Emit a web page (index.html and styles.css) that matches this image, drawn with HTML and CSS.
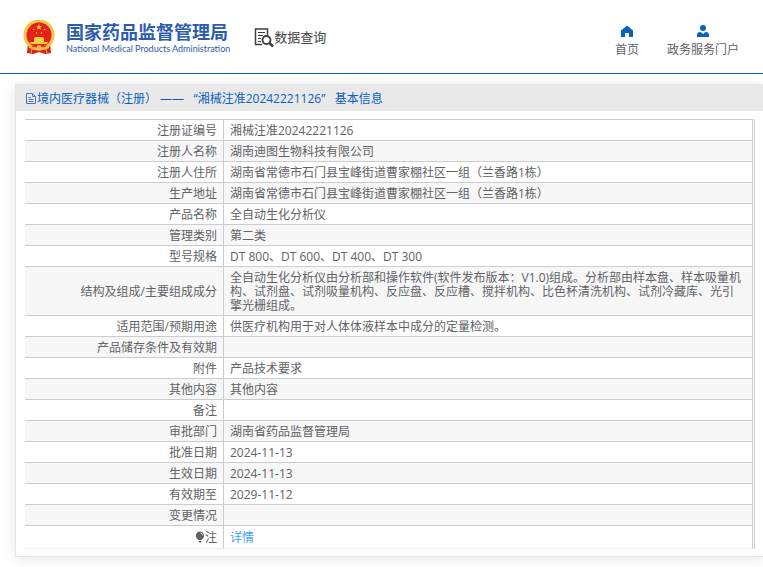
FILE: index.html
```html
<!DOCTYPE html>
<html lang="zh-CN">
<head>
    <meta charset="UTF-8">
    <meta name="viewport" content="width=device-width, initial-scale=1.0">
    <title>国家药品监督管理局 数据查询</title>
    <link rel="stylesheet" href="styles.css">
</head>
<body>
    <header class="header">
        <svg class="emblem" viewBox="0 0 32 34">
            <path d="M5 23 L4 33 L10 34 L16 32 L22 34 L28 33 L27 23 Z" fill="#d9201a"/>
            <circle cx="16" cy="15" r="15.500" fill="#f3bc3c"/>
            <circle cx="16" cy="15" r="14" fill="none" stroke="#f9d45c" stroke-width="1"/>
            <circle cx="16" cy="15" r="12.500" fill="#e3231b"/>
            <path d="M16 4 L16.8 6.1 L19 6.2 L17.3 7.6 L17.9 9.8 L16 8.5 L14.1 9.8 L14.7 7.6 L13 6.2 L15.2 6.1 Z" fill="#f9cf3f"/>
            <circle cx="10.500" cy="9.500" r="0.800" fill="#f9cf3f"/>
            <circle cx="21.500" cy="9.500" r="0.800" fill="#f9cf3f"/>
            <circle cx="13.500" cy="13" r="0.800" fill="#f9cf3f"/>
            <circle cx="18.500" cy="13" r="0.800" fill="#f9cf3f"/>
            <path d="M12 17 H20 L21 19 H11 Z M11 19 H21 V22 H11 Z M7 22 H25 L24 24 H8 Z" fill="#f9cf3f"/>
            <path d="M5 23 Q11 28 16 25 Q21 28 27 23 L26 28 Q21 31 16 29 Q11 31 6 28 Z" fill="#f3bc3c"/>
            <path d="M9 26 Q12 27.500 14 26.500 M18 26.500 Q20 27.500 23 26" fill="none" stroke="#d9201a" stroke-width="1"/>
            <circle cx="16" cy="28" r="2.500" fill="#f3bc3c"/>
            <path d="M9 29 L8 33 M23 29 L24 33" stroke="#f3bc3c" stroke-width="1"/>
        </svg>
        <div class="brand">
            <h1>国家药品监督管理局</h1>
            <p>National Medical Products Administration</p>
        </div>
        <div class="section-name">
            <svg width="20" height="20" viewBox="0 0 20 20" fill="none" stroke="#3d3d4a">
                <path d="M8 16.500 H1.500 V1 H13.500 V7" stroke-width="1.500"/>
                <path d="M4 4.500 H11 M4 7.500 H9 M4 10.500 H7 M4 13.500 H7" stroke-width="1"/>
                <circle cx="12.500" cy="12" r="4" stroke-width="1.800"/>
                <path d="M15.500 15 L19 18.500" stroke-width="2.500"/>
            </svg>
            <span>数据查询</span>
        </div>
        <nav class="nav">
            <a href="#">
                <svg width="12" height="12" viewBox="0 0 12 12" fill="#0860c0">
                    <path d="M6 0.500 L0 5.500 V12 H4 V8 H8 V12 H12 V5.500 Z"/>
                </svg>
                首页
            </a>
            <a href="#">
                <svg width="12" height="12" viewBox="0 0 12 12" fill="#0860c0">
                    <circle cx="6" cy="3" r="3"/>
                    <path d="M0 12 V10 Q0 7.200 3.500 7 L6 9 L8.500 7 Q12 7.200 12 10 V12 Z"/>
                </svg>
                政务服务门户
            </a>
        </nav>
    </header>

    <main class="card">
        <h2 class="card-title">
            <svg width="10" height="12" viewBox="0 0 10 12" fill="none" stroke="#4a78c0">
                <path d="M0.500 0.500 H6.500 L9.500 3.500 V10.500 H0.500 Z M6.500 0.500 V3.500 H9.500 M2.500 4.500 H5 M2.500 6.500 H7.500 M2.500 8.500 H7.500"/>
            </svg>
            <span>境内医疗器械（注册） ——&nbsp;&nbsp; “湘械注准20242221126”&nbsp;&nbsp; 基本信息</span>
        </h2>
        <div class="table-wrap">
            <table>
                <tbody>
                    <tr><th scope="row">注册证编号</th><td>湘械注准20242221126</td></tr>
                    <tr><th scope="row">注册人名称</th><td>湖南迪图生物科技有限公司</td></tr>
                    <tr><th scope="row">注册人住所</th><td>湖南省常德市石门县宝峰街道曹家棚社区一组（兰香路1栋）</td></tr>
                    <tr><th scope="row">生产地址</th><td>湖南省常德市石门县宝峰街道曹家棚社区一组（兰香路1栋）</td></tr>
                    <tr><th scope="row">产品名称</th><td>全自动生化分析仪</td></tr>
                    <tr><th scope="row">管理类别</th><td>第二类</td></tr>
                    <tr><th scope="row">型号规格</th><td>DT 800、DT 600、DT 400、DT 300</td></tr>
                    <tr><th scope="row">结构及组成/主要组成成分</th><td>全自动生化分析仪由分析部和操作软件(软件发布版本：V1.0)组成。分析部由样本盘、样本吸量机构、试剂盘、试剂吸量机构、反应盘、反应槽、搅拌机构、比色杯清洗机构、试剂冷藏库、光引擎光栅组成。</td></tr>
                    <tr><th scope="row">适用范围/预期用途</th><td>供医疗机构用于对人体体液样本中成分的定量检测。</td></tr>
                    <tr><th scope="row">产品储存条件及有效期</th><td></td></tr>
                    <tr><th scope="row">附件</th><td>产品技术要求</td></tr>
                    <tr><th scope="row">其他内容</th><td>其他内容</td></tr>
                    <tr><th scope="row">备注</th><td></td></tr>
                    <tr><th scope="row">审批部门</th><td>湖南省药品监督管理局</td></tr>
                    <tr><th scope="row">批准日期</th><td>2024-11-13</td></tr>
                    <tr><th scope="row">生效日期</th><td>2024-11-13</td></tr>
                    <tr><th scope="row">有效期至</th><td>2029-11-12</td></tr>
                    <tr><th scope="row">变更情况</th><td></td></tr>
                    <tr class="note">
                        <th scope="row">
                            <svg width="10" height="12" viewBox="0 0 10 12">
                                <path d="M5 0.500 A4.200 4.200 0 0 1 7.500 8 L6.500 9 H3.500 L2.500 8 A4.200 4.200 0 0 1 5 0.500 Z M3.500 10 H6.500 L6 11.500 H4 Z" fill="#606266"/>
                                <path d="M5.500 2 Q7.500 2.500 7.800 4.500" fill="none" stroke="#fff" stroke-width="0.700"/>
                            </svg>注
                        </th>
                        <td><a href="#">详情</a></td>
                    </tr>
                </tbody>
            </table>
        </div>
    </main>
</body>
</html>
```
FILE: styles.css
```css
* {
    margin: 0;
    padding: 0;
    box-sizing: border-box;
}

body {
    background-color: #fff;
    color: #606266;
    font-family: "Open Sans", "Noto Sans CJK SC", sans-serif;
    font-size: 12px;
    line-height: 14px;
}

a {
    color: #409eff;
    text-decoration: none;
}

.header {
    display: flex;
    align-items: center;
    height: 74px;
    padding: 0 24px 0 23px;
    border-bottom: 1px solid #0860c0;
}

.emblem {
    width: 32px;
    height: 34px;
    margin-right: 11px;
}

.brand {
    padding-top: 2px;
    color: #2b5cad;
    white-space: nowrap;
}

.brand h1 {
    font-size: 18px;
    line-height: 22px;
}

.brand p {
    font-family: Lato, sans-serif;
    font-size: 9px;
    line-height: 12px;
}

.section-name {
    display: flex;
    align-items: center;
    margin-left: 24px;
    color: #444;
    font-size: 13px;
    white-space: nowrap;
}

.section-name svg {
    margin-top: 3px;
}

.nav {
    display: flex;
    gap: 28px;
    margin-left: auto;
    padding-top: 9px;
}

.nav a {
    display: flex;
    flex-direction: column;
    align-items: center;
    gap: 6px;
    color: #606266;
    white-space: nowrap;
}

.card {
    margin: 10px 0 10px 15px;
    padding-bottom: 7px;
    border: solid #e6e6e6;
    border-width: 0 0 1px 1px;
    box-shadow: 0 2px 12px rgba(0, 0, 0, 0.1);
}

.card-title {
    display: flex;
    align-items: center;
    gap: 1px;
    height: 27px;
    padding: 2px 10px 0;
    background-color: #e9e9e9;
    color: #0860c0;
    font-size: 12px;
    font-weight: normal;
}

.table-wrap {
    margin: 8px 8px 0 9px;
    padding-right: 1px;
    border-right: 1px solid #ccc;
}

table {
    width: 100%;
    border-spacing: 0;
    border-top: 1px solid #ccc;
    table-layout: fixed;
}

th,
td {
    height: 21px;
    padding: 4px 6px 2px;
    border-right: 1px solid #ccc;
    border-bottom: 1px solid #ccc;
    vertical-align: middle;
}

th {
    width: 199px;
    font-weight: normal;
    text-align: right;
}

td {
    padding-right: 8px;
    text-align: left;
}

tr:nth-child(even) {
    background-color: #f7f7f7;
}

.note th,
.note td {
    height: 23px;
    border-bottom-color: #ebeef5;
}

.note svg {
    vertical-align: -1px;
}
```
